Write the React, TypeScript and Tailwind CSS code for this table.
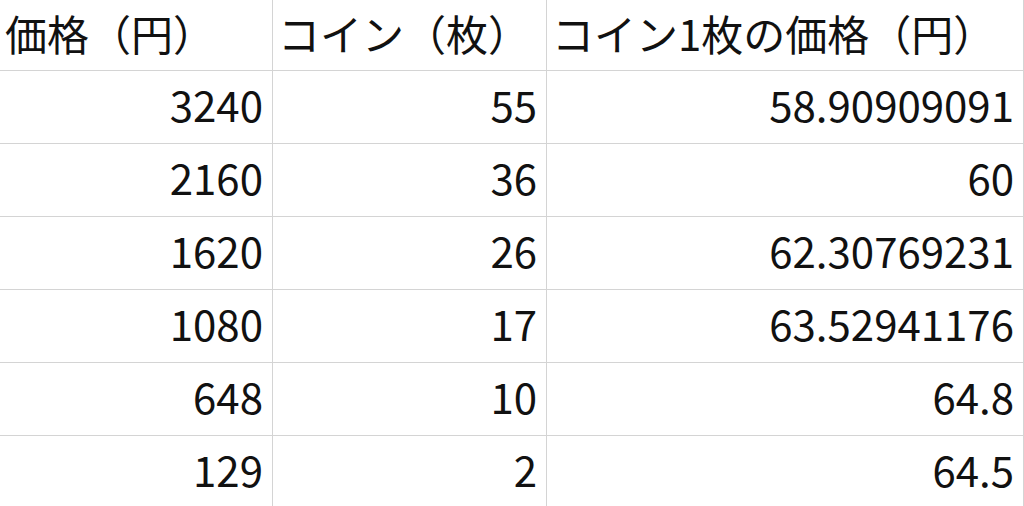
const headers = ["価格（円）", "コイン（枚）", "コイン1枚の価格（円）"];

const rows = [
  ["3240", "55", "58.90909091"],
  ["2160", "36", "60"],
  ["1620", "26", "62.30769231"],
  ["1080", "17", "63.52941176"],
  ["648", "10", "64.8"],
  ["129", "2", "64.5"],
];

export default function App() {
  return (
    <div
      className="w-[1024px] h-[506px] overflow-hidden bg-white text-[#111]"
      style={{ fontFamily: '"Noto Sans CJK JP", "Noto Sans", sans-serif' }}
    >
      <div className="grid grid-cols-[273px_274px_1fr]">
        {headers.map((h) => (
          <div
            key={h}
            className="h-[71px] flex items-center pl-[5px] pb-[4px] text-[42px] leading-none border-r border-b border-[#d4d4d4] whitespace-nowrap overflow-hidden"
          >
            {h}
          </div>
        ))}
        {rows.map((r, i) =>
          r.map((v, j) => (
            <div
              key={i + "-" + j}
              className="h-[73px] flex items-center justify-end pr-[9px] pb-[6px] text-[42px] leading-none border-r border-b border-[#d4d4d4]"
            >
              {v}
            </div>
          ))
        )}
      </div>
    </div>
  );
}
